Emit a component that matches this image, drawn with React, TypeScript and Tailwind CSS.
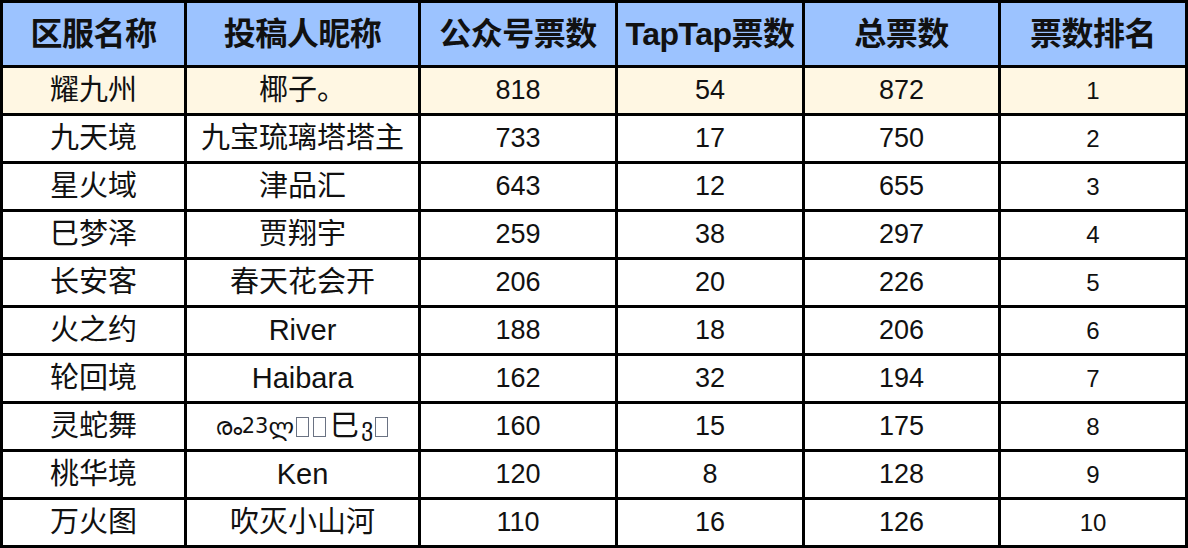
const rows = [
  ["耀九州", "椰子。", "818", "54", "872", "1"],
  ["九天境", "九宝琉璃塔塔主", "733", "17", "750", "2"],
  ["星火域", "津品汇", "643", "12", "655", "3"],
  ["巳梦泽", "贾翔宇", "259", "38", "297", "4"],
  ["长安客", "春天花会开", "206", "20", "226", "5"],
  ["火之约", "River", "188", "18", "206", "6"],
  ["轮回境", "Haibara", "162", "32", "194", "7"],
  ["灵蛇舞", "", "160", "15", "175", "8"],
  ["桃华境", "Ken", "120", "8", "128", "9"],
  ["万火图", "吹灭小山河", "110", "16", "126", "10"],
];

const headers = ["区服名称", "投稿人昵称", "公众号票数", "TapTap票数", "总票数", "票数排名"];

function Tofu() {
  return <span className="inline-block w-[13px] h-[20px] border border-gray-500 mx-[2px]" />;
}

// nickname with glyphs that the original font could not show
function OddName() {
  return (
    <span
      className="inline-flex items-center text-[24px] leading-none"
      style={{ fontFamily: '"DejaVu Sans", "Noto Sans CJK SC", sans-serif' }}
    >
      <span>രം</span>
      <span className="text-[21px]">23</span>
      <span>ლ</span>
      <Tofu />
      <Tofu />
      <span className="text-[29px] mx-[2px]">巳</span>
      <span>ვ</span>
      <Tofu />
    </span>
  );
}

export default function App() {
  return (
    <div
      className="w-[1188px] h-[548px] bg-black p-[3px] grid gap-[3px] grid-cols-[181px_231px_194px_184px_193px_184px] grid-rows-[62px_repeat(10,45px)] text-[#111]"
      style={{ fontFamily: '"Liberation Sans", "Noto Sans CJK SC", sans-serif' }}
    >
      {headers.map((h) => (
        <div key={h} className="bg-[#9cc3ff] flex items-center justify-center text-[32px] font-bold tracking-[-0.5px]">
          {h}
        </div>
      ))}
      {rows.map((r, i) =>
        r.map((c, j) => (
          <div
            key={i + "-" + j}
            className={
              "flex items-center justify-center " +
              (i === 0 ? "bg-[#fff7e3] " : "bg-white ") +
              (j < 2 ? "text-[29px]" : j === 5 ? "text-[24px]" : "text-[27px]")
            }
          >
            {i === 7 && j === 1 ? <OddName /> : c}
          </div>
        ))
      )}
    </div>
  );
}
